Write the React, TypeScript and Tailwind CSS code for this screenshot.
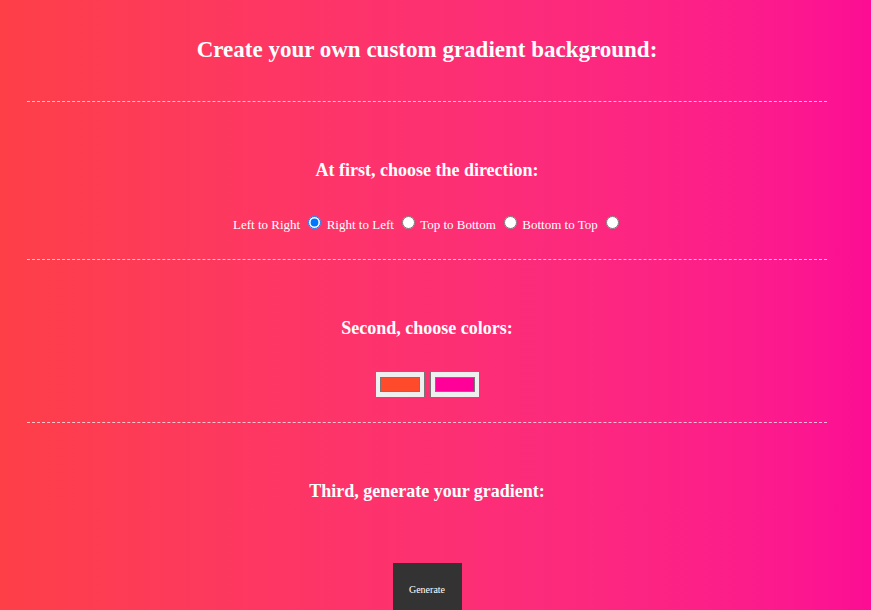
export default function App() {
    const directions = ["Left to Right", "Right to Left", "Top to Bottom", "Bottom to Top"]

    return (
        <div className="min-h-[610px] w-full bg-gradient-to-r from-[#fe3f47] to-[#fc0d94] font-['Liberation_Serif',serif] text-white overflow-hidden">
            <div className="w-[800px] ml-[27px] flex flex-col items-center">
                <h1 className="mt-[36px] text-[23px] leading-[28px] font-bold">Create your own custom gradient background:</h1>
                <hr className="mt-[37px] w-full border-0 border-t border-dashed border-white/70" />

                <h2 className="mt-[56px] text-[18px] leading-[24px] font-bold">At first, choose the direction:</h2>
                <div className="mt-[33px] text-[13px] leading-[20px] text-center">
                    {directions.map((d, i) => (
                        <span key={d}>
                            {d}{" "}
                            <input type="radio" name="direction" defaultChecked={i === 0} className="ml-[5px] mr-[2px] align-[0px]" />{" "}
                        </span>
                    ))}
                </div>
                <hr className="mt-[24px] w-full border-0 border-t border-dashed border-white/70" />

                <h2 className="mt-[56px] text-[18px] leading-[24px] font-bold">Second, choose colors:</h2>
                <div className="mt-[31px] flex gap-[5px]">
                    <input type="color" defaultValue="#ff4b2b" className="w-[50px] h-[27px] bg-[#efefef] border border-[#767676] px-[2px] py-[1px]" />
                    <input type="color" defaultValue="#ff0099" className="w-[50px] h-[27px] bg-[#efefef] border border-[#767676] px-[2px] py-[1px]" />
                </div>
                <hr className="mt-[24px] w-full border-0 border-t border-dashed border-white/70" />

                <h2 className="mt-[56px] text-[18px] leading-[24px] font-bold">Third, generate your gradient:</h2>
                <button className="mt-[60px] w-[69px] h-[60px] bg-[#333333] text-white text-[10px] pb-[8px]">Generate</button>
            </div>
        </div>
    )
}
